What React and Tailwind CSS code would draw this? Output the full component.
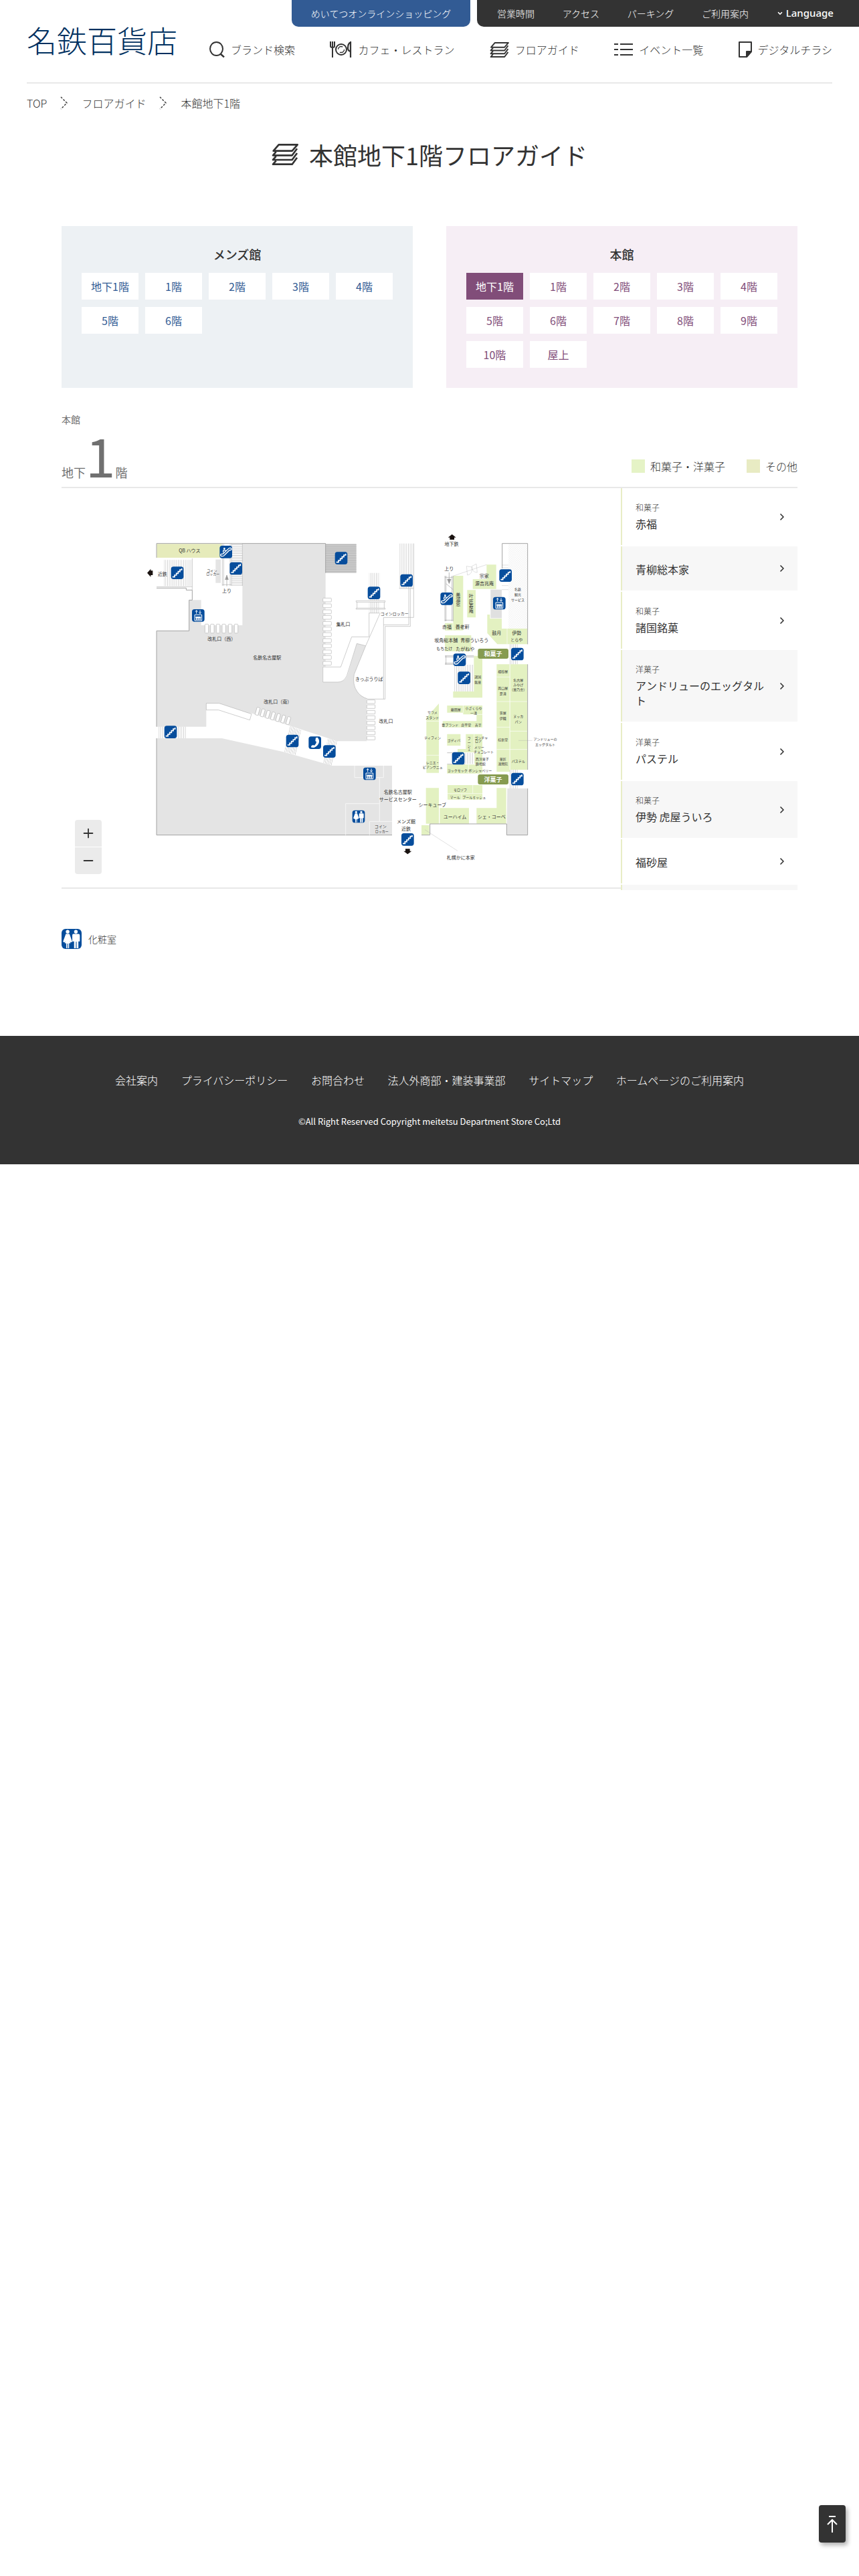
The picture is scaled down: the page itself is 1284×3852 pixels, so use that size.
import clsx from "clsx";
import { ChevronRight, ChevronDown, Plus, Minus } from "lucide-react";

const utilityLinks = ["営業時間", "アクセス", "パーキング", "ご利用案内"];

const mensFloors = ["地下1階", "1階", "2階", "3階", "4階", "5階", "6階"];
const mainFloors = ["地下1階", "1階", "2階", "3階", "4階", "5階", "6階", "7階", "8階", "9階", "10階", "屋上"];

const shops = [
  { tag: "和菓子", name: "赤福" },
  { name: "青柳総本家" },
  { tag: "和菓子", name: "諸国銘菓" },
  { tag: "洋菓子", name: "アンドリューのエッグタルト" },
  { tag: "洋菓子", name: "パステル" },
  { tag: "和菓子", name: "伊勢 虎屋ういろ" },
  { name: "福砂屋" },
];

const footerLinks = ["会社案内", "プライバシーポリシー", "お問合わせ", "法人外商部・建装事業部", "サイトマップ", "ホームページのご利用案内"];

function SearchIcon() {
  return (
    <svg viewBox="0 0 23 24" className="w-[23px] h-6" fill="none" stroke="#333" strokeWidth="2">
      <ellipse cx="10.5" cy="11" rx="9.5" ry="10" />
      <path d="M16.5 18.5 22 23.5" strokeWidth="2.4" />
    </svg>
  );
}

function CafeIcon() {
  return (
    <svg viewBox="0 0 33 24" className="w-[33px] h-6" fill="none" stroke="#333">
      <path d="M1 0v7q0 2 3 2t3-2V0M4 0v24" strokeWidth="2" />
      <circle cx="17" cy="12" r="8" strokeWidth="2" />
      <circle cx="17" cy="12" r="4.5" strokeWidth="1.4" strokeDasharray="9 5" />
      <path d="M31 0v24M31 1q-4 2-4 9 0 4 4 5" strokeWidth="2.2" />
    </svg>
  );
}

function LayersIcon({ className }) {
  return (
    <svg viewBox="0 0 30 24" className={className} fill="none" stroke="#333" strokeWidth="2" strokeLinejoin="round">
      <path d="M8 1h21l-6 7H2z" />
      <path d="M5 9 1.5 13H23l5.5-7.5M5 14l-3.500 4H23l5.500-7.500M5 19l-3.500 4H23l5.500-7.500" />
    </svg>
  );
}

function ListIcon() {
  return (
    <svg viewBox="0 0 28 20" className="w-7 h-5" stroke="#333" strokeWidth="2.2">
      <path d="M0 2h6M9 2h19M0 10h6M9 10h19M0 18h6M9 18h19" />
    </svg>
  );
}

function LeafletIcon() {
  return (
    <svg viewBox="0 0 20 24" className="w-5 h-6" fill="none" stroke="#333" strokeWidth="2" strokeLinejoin="round">
      <path d="M1 1h18v14l-7 8H1z" />
      <path d="M12 23v-8h7z" fill="#333" />
    </svg>
  );
}

const navItems = [
  { label: "ブランド検索", icon: <SearchIcon /> },
  { label: "カフェ・レストラン", icon: <CafeIcon /> },
  { label: "フロアガイド", icon: <LayersIcon className="w-[29px] h-[23px]" /> },
  { label: "イベント一覧", icon: <ListIcon /> },
  { label: "デジタルチラシ", icon: <LeafletIcon /> },
];

function Header() {
  return (
    <header>
      <div className="flex justify-end gap-[10px] h-10 text-sm font-light text-white">
        <a href="#" className="flex items-center justify-center w-[267px] bg-[#325b94] rounded-b-[10px]">
          めいてつオンラインショッピング
        </a>
        <div className="flex items-center justify-between w-[571px] pl-[30px] pr-[38px] bg-[#333] rounded-bl-[10px]">
          {utilityLinks.map((l) => (
            <a key={l} href="#">{l}</a>
          ))}
          <button type="button" className="flex items-center gap-1 text-[15px] font-['Noto_Sans',sans-serif] font-medium">
            <ChevronDown size={10} strokeWidth={4} />
            Language
          </button>
        </div>
      </div>
      <div className="flex items-start justify-between gap-12 h-[85px] mx-10 border-b-2 border-[#e8e8e8]">
        <a href="#" className="text-[45px] leading-10 font-light text-[#00305f] whitespace-nowrap">名鉄百貨店</a>
        <nav className="flex flex-1 items-center justify-between h-7 mt-5">
          {navItems.map((n) => (
            <a key={n.label} href="#" className="flex items-center gap-[9px] leading-[22px] font-light whitespace-nowrap">
              {n.icon}
              {n.label}
            </a>
          ))}
        </nav>
      </div>
    </header>
  );
}

function CrumbArrow() {
  return (
    <svg viewBox="0 0 12 20" className="w-3 h-5" fill="none" stroke="#333" strokeWidth="1.4" strokeDasharray="3 2">
      <path d="M1 1l9 9-9 9" />
    </svg>
  );
}

function FloorPanel({ title, floors, active, className, linkClass, activeClass }) {
  return (
    <section className={clsx("flex-1 px-[30px] pt-[27px] pb-[30px]", className)}>
      <h2 className="text-lg leading-[30px] font-medium text-center">{title}</h2>
      <div className="grid grid-cols-5 gap-x-[10px] gap-y-[11px] mt-[13px]">
        {floors.map((f) => (
          <a
            key={f}
            href="#"
            className={clsx("flex items-center justify-center h-10", f === active ? activeClass : linkClass)}
          >
            {f}
          </a>
        ))}
      </div>
    </section>
  );
}

/* ---- floor map ---- */

function Sign({ x, y, children }) {
  return (
    <g transform={`translate(${x} ${y})`}>
      <rect x="-28" y="-28" width="56" height="56" rx="11" fill="#064d9c" />
      {children}
    </g>
  );
}

function Stairs({ x, y }) {
  return (
    <Sign x={x} y={y}>
      <path d="M-22 18h10v-8h8v-8h8v-8h8v-8h8v-6" fill="none" stroke="#fff" strokeWidth="5" />
    </Sign>
  );
}

function Escalator({ x, y }) {
  return (
    <Sign x={x} y={y}>
      <path
        d="M-18 19q-6 0-6-5t6-5h5l24-23q3-4 8-4 6 0 6 5t-6 5h-3L-6 14q-3 5-8 5zM-12 3v-7q0-5 5-5t5 5"
        fill="none"
        stroke="#fff"
        strokeWidth="4"
      />
      <circle cx="-7" cy="-15" r="4" fill="#fff" />
    </Sign>
  );
}

function Elevator({ x, y }) {
  return (
    <Sign x={x} y={y}>
      <path d="M-16-3h32v26h-32zM-8-8v-14M-13-17l5-6 5 6M8-23v14M3-14l5 6 5-6" fill="none" stroke="#fff" strokeWidth="3" />
      <path d="M-12 5h24v6H-12z" fill="#fff" />
      <path d="M-8 5v15M0 5v15M8 5v15" stroke="#fff" strokeWidth="5" />
    </Sign>
  );
}

function RestroomShape() {
  return (
    <g fill="#fff">
      <circle cx="-11" cy="-20" r="5" />
      <path d="M-16-14h10l8 22-5 2-2-4 2 6h-4v14h-3V13h-2v13h-3V12h-4l2-6-2 4-5-2z" />
      <circle cx="12" cy="-20" r="5" />
      <path d="M5-14h14q4 0 4 4V7h-4v19h-5V8h-2v18H7V7H2v-17q0-4 3-4z" />
    </g>
  );
}

// [text, x, y, size]
const labels = [
  ["QB ハウス", 220, 100, 21],
  ["近鉄", 98, 203, 21],
  ["コイン", 320, 186, 15],
  ["ロッカー", 325, 203, 15],
  ["上り", 387, 280, 21],
  ["改札口（西）", 364, 496, 21],
  ["名鉄名古屋駅", 568, 580, 21],
  ["集札口", 909, 430, 21],
  ["改札口（南）", 616, 778, 21],
  ["コインロッカー", 1139, 382, 18],
  ["きっぷうりば", 1025, 676, 21],
  ["改札口", 1101, 865, 21],
  ["名鉄名古屋駅", 1154, 1183, 21],
  ["サービスセンター", 1154, 1216, 21],
  ["コイン", 1076, 1336, 18],
  ["ロッカー", 1082, 1358, 15],
  ["メンズ館", 1191, 1315, 21],
  ["近鉄", 1191, 1348, 21],
  ["地下鉄", 1395, 70, 21],
  ["上り", 1384, 181, 21],
  ["宗家", 1541, 214, 21],
  ["源吉兆庵", 1542, 247, 21],
  ["赤福", 1374, 440, 21],
  ["養老軒", 1444, 440, 21],
  ["坂角総本舗", 1370, 502, 21],
  ["青柳ういろう", 1498, 502, 21],
  ["もちたけ", 1363, 539, 18],
  ["たがねや", 1456, 539, 21],
  ["鼓月", 1597, 469, 21],
  ["伊勢", 1687, 469, 21],
  ["とらや", 1687, 500, 18],
  ["名鉄", 1692, 272, 15],
  ["観光", 1692, 295, 15],
  ["サービス", 1692, 318, 15],
  ["諸国", 1513, 664, 15],
  ["銘菓", 1513, 687, 15],
  ["福砂屋", 1625, 639, 15],
  ["両口屋", 1625, 715, 15],
  ["是清", 1625, 738, 15],
  ["名古屋", 1694, 678, 15],
  ["みやげ", 1694, 700, 15],
  ["（菓乃舎）", 1694, 722, 15],
  ["サラメ", 1309, 822, 15],
  ["スタンド", 1309, 847, 15],
  ["藤田屋", 1414, 810, 15],
  ["小ざくらや", 1494, 805, 15],
  ["一清", 1494, 826, 15],
  ["豊ブランド", 1388, 880, 15],
  ["良平堂", 1460, 880, 15],
  ["吉芋", 1514, 880, 15],
  ["ティフィン", 1310, 937, 15],
  ["ゴディバ", 1405, 948, 15],
  ["ゴンチャ", 1528, 936, 15],
  ["ロア", 1515, 953, 15],
  ["メリー", 1519, 978, 15],
  ["チョコレート", 1539, 1000, 15],
  ["西洋菓子", 1532, 1033, 15],
  ["鹿鳴館", 1525, 1053, 15],
  ["レニエ・", 1310, 1047, 15],
  ["ビアンヴニュ", 1310, 1069, 15],
  ["ヨックモック", 1421, 1083, 15],
  ["ボンシャペリー", 1523, 1083, 15],
  ["モロゾフ", 1434, 1170, 15],
  ["マール", 1410, 1204, 15],
  ["ブールミッシュ", 1496, 1204, 15],
  ["シーキューブ", 1309, 1238, 21],
  ["ユーハイム", 1410, 1292, 21],
  ["シェ・コーベ", 1574, 1292, 21],
  ["笹屋", 1625, 826, 15],
  ["伊織", 1625, 849, 15],
  ["桂新堂", 1625, 946, 15],
  ["菓匠", 1625, 1033, 15],
  ["清閑院", 1625, 1053, 15],
  ["ヌッカ", 1694, 841, 15],
  ["パン", 1694, 864, 15],
  ["パステル", 1694, 1041, 15],
  ["アンドリューの", 1815, 943, 15],
  ["エッグタルト", 1815, 966, 15],
  ["札幌かに本家", 1436, 1475, 21],
];

// one glyph per line
const verticalLabels = [
  ["美濃忠", 1424, 296, 22, 21],
  ["叶匠寿庵", 1483, 304, 22, 21],
  ["フーシェ", 1474, 940, 16, 15],
];

const gatesWest = [289, 314, 340, 366, 394, 421];
const gatesCollect = [313, 339, 366, 391, 418, 443, 468, 495, 519, 546, 571, 597];
const gatesSouth = [0, 1, 2, 3, 4, 5, 6];
const gatesEast = [770, 792, 817, 841, 865, 887, 910, 933];

function FloorMap() {
  return (
    <svg viewBox="-354 -180 2508 1791" className="w-full h-full" role="img" aria-label="本館地下1階フロアマップ">
      <defs>
        <pattern id="v" width="8" height="8" patternUnits="userSpaceOnUse">
          <path d="M1 0v8" stroke="#bbb" strokeWidth="2" />
        </pattern>
        <pattern id="h" width="8" height="8" patternUnits="userSpaceOnUse">
          <path d="M0 1h8" stroke="#aaa" strokeWidth="2" />
        </pattern>
        <pattern id="s" width="7" height="8" patternUnits="userSpaceOnUse" patternTransform="rotate(13)">
          <path d="M1 0v8" stroke="#bbb" strokeWidth="2" />
        </pattern>
        <pattern id="x" width="10" height="10" patternUnits="userSpaceOnUse">
          <path d="M0 0l10 10M10 0L0 10" stroke="#e2e2e2" strokeWidth="1" />
        </pattern>
      </defs>

      {/* station concourse */}
      <g fill="#e4e4e4">
        <path d="M457 68H830V620H818V690H885Q915 690 928 660L970 517 1010 527 958 655Q950 700 970 730 985 755 1020 766H1015V955H882L500 830 350 815H295V890H72V460H218V322H272V435H457z" />
        <path d="M72 942H365L640 1003 860 1065H1128V1376H72z" />
        <path d="M337 140h23v105h-23z" />
        <path d="M830 70h138v130H830z" fill="#ccc" />
      </g>
      <path d="M73 70h292v62H73z" fill="#e6ebbb" />
      <path d="M105 142h127v117H105zM80 890h25v52H80zM165 890h40v52h-40zM1025 200h47v180h-47zM1160 68h65v202h-65z" fill="url(#v)" />
      <path d="M408 70h49v188h-49zM830 70h138v130H830z" fill="url(#h)" />
      <path d="M668 885l52 20-23 112-52-14zM840 942l42 13-24 110-41-13z" fill="url(#s)" />

      <g fill="none" stroke="#a3a3a3" strokeWidth="3">
        <path d="M72 132V68H830V200M72 268H205V277H232V322H218V460H72V890M72 942V1376H1128" />
      </g>
      <g fill="none" stroke="#b5b5b5" strokeWidth="2">
        <path d="M232 135V277M72 262H232M367 70V258M373 70V258M402 70V258M408 70V258M367 253H408M457 68V258" />
        <path d="M947 487H1025V380H1072M1075 380L1010 527 958 655Q950 700 970 730 985 755 1020 766H1097V440H1210V270M1090 766V400H1225V68M1203 270V433H1090M1160 270H1225" />
        <path d="M967 325H1097V331H967zM967 358H1097V363H967zM971 331V358M1093 331V358" fill="#fff" />
      </g>
      <path d="M818 622H898L947 487V560L925 662Q912 690 885 690H818z" fill="#fff" />
      <path d="M818 622H898L947 487M818 622V690H885Q912 690 925 662L970 517L1010 527" fill="none" stroke="#b5b5b5" strokeWidth="2" />
      <path d="M295 785H353L498 833 490 860 350 815H295z" fill="#fff" stroke="#b5b5b5" strokeWidth="2" />
      <path d="M920 1376V1235H1072M1072 1120V1315M1027 1376V1315H1128M960 1065V1118H1090V1065" fill="none" stroke="#f6f6f6" strokeWidth="3" />

      <g fill="#fff" stroke="#b5b5b5" strokeWidth="2">
        {gatesWest.map((x) => <rect key={x} x={x} y="430" width="16" height="40" rx="3" />)}
        {gatesCollect.map((y) => <rect key={y} x="818" y={y} width="38" height="17" rx="3" />)}
        {gatesSouth.map((i) => (
          <rect key={i} width="14" height="35" rx="3" transform={`translate(${523 + i * 23} ${802 + i * 7}) rotate(16)`} />
        ))}
        {gatesEast.map((y) => <rect key={y} x="1015" y={y} width="37" height="16" rx="2" />)}
      </g>

      <g fill="#999" stroke="#999" strokeWidth="2">
        <path d="M387 260V225M380 230h14l-7-20zM1384 198V230M1376 228h16l-8 20z" />
      </g>

      {/* food hall */}
      <path d="M1650 70h84v380h-84z" fill="url(#x)" />
      <path d="M1570 275h50v128h-50z" fill="#e0e0e0" />
      <path d="M1645 1167h90v209h-93z" fill="#e4e4e4" />
      <g fill="#e3f1c1">
        <path d="M1552 163h43v109h-105v-44h62zM1465 277h38v123h-38zM1402 213h45v245h-45zM1365 425h35v33h-35zM1365 480h118v72h-118z" />
        <path d="M1555 387h12v18h53v45h115v70h-135l-45-50z" />
        <path d="M1495 572h38v188h-131v-28h93z" />
        <path d="M1597 610h59v482h-59zM1657 610h78v473h-78z" />
        <path d="M1338 786v311h-56V850z" />
        <path d="M1375 795h158v98h-178v-28h152v-30h-60v-8h-72z" />
        <path d="M1375 923h60v52h-60zM1459 923h74v82h-111v-15h37zM1497 1007h36v50h-36zM1375 1060h158v40h-158z" />
        <path d="M1377 1152h156v65h-156zM1280 1165h58v160h-58zM1342 1255h131v70h-131zM1507 1255h90v-90h43v160h-133zM1260 1332h35v43h-35z" />
      </g>
      <path
        d="M1597 667h59M1597 777h138M1597 892h59M1657 910h78M1597 992h138M1656 610v475M1644 450v70M1282 865h56M1282 1018h56M1447 795v32M1507 835h26M1496 923v134M1471 1060v40M1377 1190h156M1440 1190v27M1490 1152v38"
        stroke="#fff"
        strokeWidth="2"
        fill="none"
      />
      <path d="M1405 612h87v120h-87zM1655 520h40v90h-40zM1455 1007h37v50h-37zM1655 1083h40v84h-40z" fill="url(#v)" />
      <g fill="none" stroke="#a3a3a3" strokeWidth="2">
        <path d="M1622 180V68H1736V520M1736 610V1083M1736 1167V1376H1642V1326H1298V1376H1260" strokeWidth="3" />
        <path d="M1620 165h30M1620 177h30M1620 257h30M1620 275h30" strokeWidth="1" />
        <path d="M1365 213V417M1370 213V417M1397 213V417M1402 213V417M1365 220H1400M1365 412H1400M1370 248L1402 275" />
        <path d="M1365 572H1495M1365 577H1495M1365 605H1405M1365 610H1405M1370 572V610M1375 1007H1400M1375 1058H1455" />
        <path d="M1402 214L1552 163M1462 170l4 40q24-4 20-36zM1506 160l4 38q-24 0-24-28zM1695 952H1757M1275 1352L1422 1447" strokeWidth="1" />
      </g>

      <g fill="#333" className="font-normal">
        {labels.map(([t, x, y, size], i) => (
          <text key={i} x={x} y={y} fontSize={size} textAnchor="middle" dominantBaseline="central">{t}</text>
        ))}
        {verticalLabels.map(([t, x, y, step, size]) => (
          <text key={t} fontSize={size} textAnchor="middle" dominantBaseline="central">
            {[...t].map((c, i) => (
              <tspan key={i} x={x} y={y + i * step}>{c}</tspan>
            ))}
          </text>
        ))}
      </g>

      <g fill="#869b50">
        <rect x="1513" y="540" width="137" height="45" rx="9" />
        <rect x="1513" y="1104" width="137" height="45" rx="9" />
      </g>
      <g fill="#fff" fontSize="27" textAnchor="middle" className="font-bold">
        <text x="1581" y="561" dominantBaseline="central">和菓子</text>
        <text x="1581" y="1125" dominantBaseline="central">洋菓子</text>
      </g>

      <g fill="#1a1311">
        <path d="M30 200l16-18v8h9v20h-9v8z" />
        <path d="M1397 27l18 14h-8v10h-20V41h-8z" />
        <path d="M1198 1462l-18-14h8v-10h20v10h8z" />
      </g>

      <Stairs x={165} y={200} />
      <Stairs x={428} y={180} />
      <Stairs x={900} y={134} />
      <Stairs x={135} y={914} />
      <Stairs x={681} y={954} />
      <Stairs x={847} y={1001} />
      <Stairs x={1047} y={290} />
      <Stairs x={1193} y={234} />
      <Stairs x={1637} y={212} />
      <Stairs x={1690} y={564} />
      <Stairs x={1451} y={671} />
      <Stairs x={1425} y={1032} />
      <Stairs x={1690} y={1125} />
      <Stairs x={1198} y={1396} />
      <Escalator x={383} y={106} />
      <Escalator x={1373} y={316} />
      <Escalator x={1431} y={590} />
      <Elevator x={259} y={391} />
      <Elevator x={1609} y={336} />
      <Elevator x={1027} y={1101} />
      <Sign x={978} y={1293}><RestroomShape /></Sign>
      <Sign x={782} y={962}>
        <path d="M4-22l8-2q10 12 6 24-6 16-22 22l-12-1-1-6 8-5 7 2q8-5 9-16l-5-4 1-7z" fill="#fff" />
      </Sign>
    </svg>
  );
}

function ShopList() {
  return (
    <ul className="flex flex-col gap-[2px] w-[264px] h-[601px] shrink-0 overflow-hidden bg-white">
      {shops.map((s, i) => (
        <li key={s.name} className={clsx("border-l-2 border-[#e8edc6]", i % 2 === 1 && "bg-[#f7f7f7]")}>
          <a href="#" className="flex items-center justify-between pl-5 pr-[15px]">
            <span className="block w-[200px] pt-[23px] pb-[21px]">
              {s.tag && <span className="block text-xs leading-3 font-light mb-[7px]">{s.tag}</span>}
              <span className="block text-base leading-[22px]">{s.name}</span>
            </span>
            <ChevronRight size={16} strokeWidth={2.5} />
          </a>
        </li>
      ))}
      <li className="grow border-l-2 border-[#e8edc6] bg-[#f7f7f7]" />
    </ul>
  );
}

export default function App() {
  return (
    <div className="bg-white text-[#333] text-base font-['Noto_Sans_CJK_JP','Noto_Sans',sans-serif]">
      <Header />

      <nav className="flex items-center gap-5 h-[60px] mx-10 pb-[2px] font-light">
        <a href="#">TOP</a>
        <CrumbArrow />
        <a href="#">フロアガイド</a>
        <CrumbArrow />
        <span>本館地下1階</span>
      </nav>

      <main className="max-w-[1100px] mx-auto">
        <h1 className="flex items-center justify-center gap-4 h-24 pb-1 text-4xl">
          <LayersIcon className="w-10 h-8" />
          本館地下1階フロアガイド
        </h1>

        <div className="flex gap-[50px] mt-[57px]">
          <FloorPanel title="メンズ館" floors={mensFloors} className="bg-[#edf1f4]" linkClass="bg-white text-[#325b94]" />
          <FloorPanel
            title="本館"
            floors={mainFloors}
            active="地下1階"
            className="bg-[#f6eef5]"
            linkClass="bg-white text-[#814d79]"
            activeClass="bg-[#814d79] text-white"
          />
        </div>

        <p className="mt-[37px] mb-px text-sm leading-5 text-[#707070]">本館</p>
        <div className="flex items-end justify-between h-[90px] pb-[9px]">
          <p className="flex items-baseline text-lg leading-none text-[#707070]">
            地下<span className="text-[80px] leading-none">1</span>階
          </p>
          <ul className="flex gap-8 mb-3 leading-5 font-light">
            <li className="flex items-center gap-2"><span className="size-5 bg-[#e5f3c6]" />和菓子・洋菓子</li>
            <li className="flex items-center gap-2"><span className="size-5 bg-[#e8ebc3]" />その他</li>
          </ul>
        </div>

        <div className="flex items-start h-[601px] border-y-2 border-[#e8e8e8]">
          <div className="relative flex-1 h-full">
            <FloorMap />
            <div className="absolute left-5 bottom-5 flex flex-col gap-px w-10">
              <button type="button" aria-label="拡大" className="flex items-center justify-center h-10 bg-[#ebebeb] rounded-t">
                <Plus size={22} />
              </button>
              <button type="button" aria-label="縮小" className="flex items-center justify-center h-10 bg-[#ebebeb] rounded-b">
                <Minus size={22} />
              </button>
            </div>
          </div>
          <ShopList />
        </div>

        <div className="flex items-center gap-[10px] mt-[60px] text-sm font-light">
          <svg viewBox="-28 -28 56 56" className="size-[30px]">
            <rect x="-28" y="-28" width="56" height="56" rx="11" fill="#064d9c" />
            <RestroomShape />
          </svg>
          化粧室
        </div>
      </main>

      <footer className="mt-[130px] pt-[54px] pb-[54px] bg-[#333] text-white">
        <div className="flex justify-between max-w-[940px] mx-auto leading-6 font-light">
          {footerLinks.map((l) => (
            <a key={l} href="#">{l}</a>
          ))}
        </div>
        <p className="mt-10 text-[13px] leading-5 text-center">©All Right Reserved Copyright meitetsu Department Store Co;Ltd</p>
      </footer>

      <a
        href="#"
        aria-label="ページの先頭へ"
        className="fixed right-5 bottom-[50px] flex items-center justify-center w-10 h-14 rounded bg-[#333] shadow-[3px_4px_6px_rgba(0,0,0,0.3)]"
      >
        <svg viewBox="0 0 16 26" className="w-4 h-[26px]" fill="none" stroke="#fff" strokeWidth="2">
          <path d="M3 2h10M8 26V7M1 14l7-7 7 7" />
        </svg>
      </a>
    </div>
  );
}
